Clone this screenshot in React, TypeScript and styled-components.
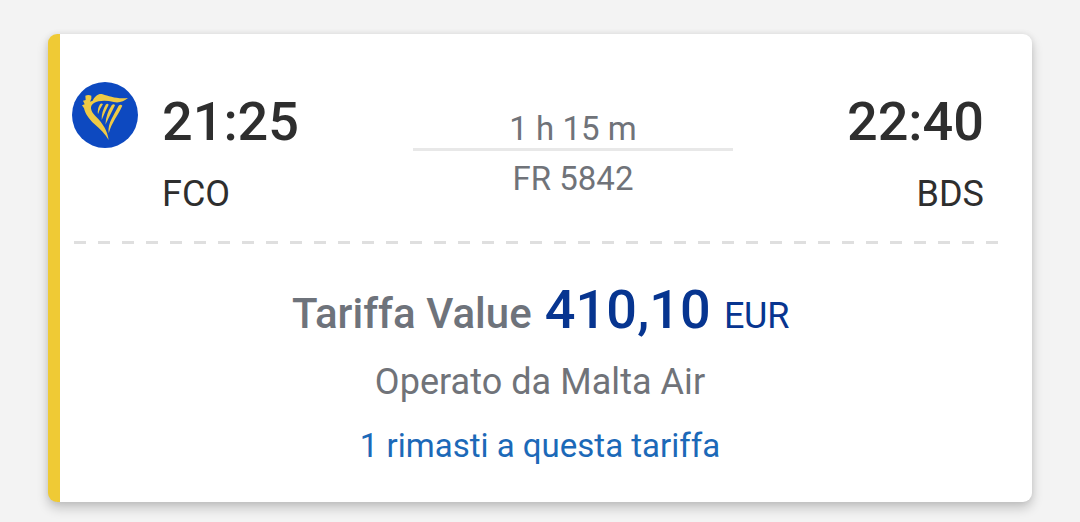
import React from 'react';
import styled, { createGlobalStyle } from 'styled-components';

const GlobalStyle = createGlobalStyle`
  * { box-sizing: border-box; }
  body {
    margin: 0;
    background: #f3f3f3;
    font-family: Roboto, "Liberation Sans", sans-serif;
  }
`;

const Page = styled.main`
  height: 522px;
  padding: 34px 48px 0;
  overflow: hidden;
`;

const Card = styled.article`
  height: 468px;
  border-left: 12px solid #efca35;
  border-radius: 9px;
  background: #fff;
  box-shadow: 0 6px 12px rgba(0, 0, 0, 0.2), 0 0 6px rgba(0, 0, 0, 0.08);
`;

const Flight = styled.section`
  display: flex;
  align-items: flex-start;
  height: 207px;
  padding: 48px 48px 0 12px;
`;

const Logo = styled.svg`
  flex: none;
  width: 66px;
  height: 66px;
`;

const Stop = styled.div<{ $end?: boolean }>`
  display: flex;
  flex-direction: column;
  gap: 20px;
  width: 140px;
  margin-top: 10px;
  margin-left: ${(p) => (p.$end ? 'auto' : '24px')};
  align-items: ${(p) => (p.$end ? 'flex-end' : 'flex-start')};
  color: #2e2e2e;
  white-space: nowrap;
`;

const Time = styled.div`
  font-size: 54px;
  font-weight: 500;
  line-height: 60px;
`;

const Airport = styled.div`
  font-size: 36px;
  line-height: 44px;
`;

const Route = styled.div`
  display: flex;
  flex-direction: column;
  width: 320px;
  margin-top: 28px;
  margin-left: 111px;
  color: #707379;
  font-size: 33px;
  line-height: 38px;
  text-align: center;
`;

const RouteLine = styled.div`
  height: 3px;
  margin-bottom: 9px;
  background: #e8e8e8;
`;

const Divider = styled.div`
  height: 3px;
  margin: 0 34px 0 14px;
  background: repeating-linear-gradient(90deg, #dfdfdf 0 12px, transparent 12px 24px);
`;

const Fare = styled.section`
  display: flex;
  flex-direction: column;
  align-items: center;
  margin-left: -12px;
  padding-top: 34px;
  white-space: nowrap;
`;

const PriceRow = styled.div`
  display: flex;
  align-items: baseline;
  height: 64px;
  padding-left: 1px;
  line-height: 64px;
`;

const FareName = styled.span`
  color: #6e737b;
  font-size: 42px;
  font-weight: 500;
  letter-spacing: 0.05px;
`;

const Amount = styled.span`
  margin-left: 13px;
  color: #073590;
  font-size: 54px;
  font-weight: 500;
  letter-spacing: 0.1px;
`;

const Currency = styled.span`
  margin-left: 13px;
  color: #073590;
  font-size: 36px;
  letter-spacing: -0.3px;
`;

const Operator = styled.div`
  margin-top: 18px;
  color: #707379;
  font-size: 36px;
  letter-spacing: 0.05px;
  line-height: 44px;
`;

const Remaining = styled.div`
  margin-top: 22px;
  color: #1c69b8;
  font-size: 33px;
  line-height: 40px;
`;

function HarpLogo() {
  return (
    <Logo viewBox="24 24 198 198" aria-hidden="true">
      <circle cx="123" cy="123" r="99" fill="#0d49c0" />
      <g fill="#efca45">
        <path d="M64 65 Q73 61 82 65 L82 74 Q80 79 78 83 L86 80 C94 66 103 58 116 61 C136 67 159 76 192 72 C180 82 165 88 149 84 C126 78 104 79 90 87 C76 96 79 110 94 126 C117 149 130 169 134 198 C124 181 109 166 92 151 C73 134 64 119 60 103 L54 94 L62 91 L57 80 L65 78 Z" />
      </g>
      <g fill="#efca45">
        <path d="M108 91 Q112 86 117 90 Q107 104 102 121 Q99 106 108 91 Z" />
        <path d="M125 92 Q130 87 134 92 Q123 113 113 138 Q112 114 125 92 Z" />
        <path d="M143 94 Q149 88 153 94 Q139 122 124 152 Q126 120 143 94 Z" />
        <path d="M164 95 Q170 89 175 95 C162 124 142 147 134 178 C130 146 151 122 164 95 Z" />
      </g>
    </Logo>
  );
}

export default function App() {
  return (
    <>
      <GlobalStyle />
      <Page>
        <Card>
          <Flight>
            <HarpLogo />
            <Stop>
              <Time>21:25</Time>
              <Airport>FCO</Airport>
            </Stop>
            <Route>
              <span>1 h 15 m</span>
              <RouteLine />
              <span>FR 5842</span>
            </Route>
            <Stop $end>
              <Time>22:40</Time>
              <Airport>BDS</Airport>
            </Stop>
          </Flight>
          <Divider />
          <Fare>
            <PriceRow>
              <FareName>Tariffa Value</FareName>
              <Amount>410,10</Amount>
              <Currency>EUR</Currency>
            </PriceRow>
            <Operator>Operato da Malta Air</Operator>
            <Remaining>1 rimasti a questa tariffa</Remaining>
          </Fare>
        </Card>
      </Page>
    </>
  );
}
